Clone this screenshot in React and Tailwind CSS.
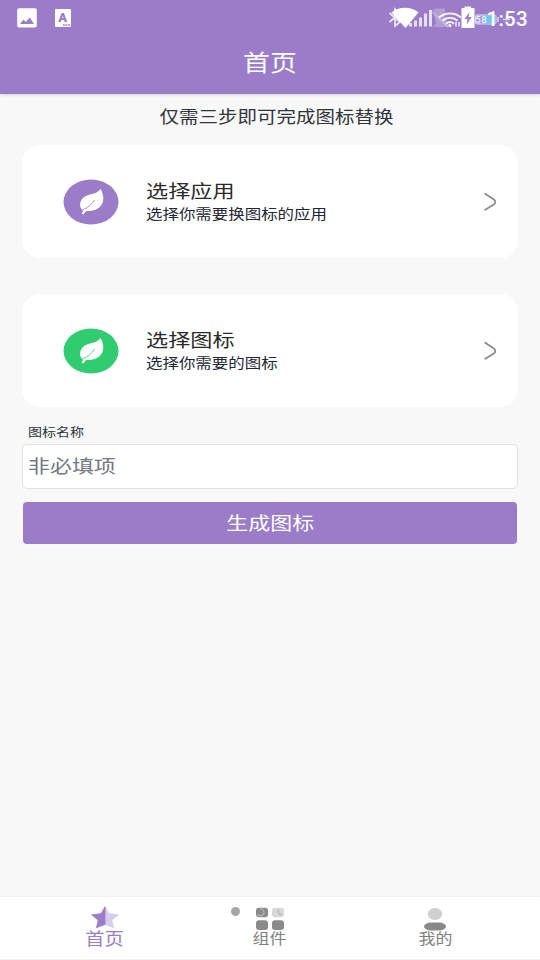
const steps = [
  { title: '选择应用', text: '选择你需要换图标的应用', color: 'text-[#9a7cc9]' },
  { title: '选择图标', text: '选择你需要的图标', color: 'text-[#30cc70]' },
];

function StatusBar() {
  return (
    <div className="relative h-9">
      <svg className="h-9 w-[540px]" viewBox="0 0 540 36" fill="none">
        {/* Notificações */}
        <rect x="17.2" y="8.2" width="19.6" height="19.4" rx="2" fill="#fff" />
        <path d="M20 24l3.500-4.500 2.300 2.400 3.900-4.300L34 24z" fill="#9a7cc9" />
        <rect x="55" y="9" width="16" height="18" rx="1" fill="#fff" />
        <text x="62.800" y="22" textAnchor="middle" fill="#9a7cc9" className="font-[Roboto] text-[13px] font-black">A</text>
        <path d="M63 25h7" stroke="#9a7cc9" strokeWidth="1.4" strokeDasharray="1.8 0.8" />

        {/* Bluetooth + wifi */}
        <path d="M389.500 13l10.500 9-5 4V9l5 4-10.500 9" stroke="#fff" strokeOpacity=".8" strokeWidth="1.800" />
        <path d="M391.500 12.500C398 6 412 6 418.500 12.500L405.500 28z" fill="#fff" />

        {/* Sinal */}
        <g fill="#fff" fillOpacity=".75">
          <rect x="409" y="23" width="3" height="3.500" />
          <rect x="414" y="20.500" width="3" height="6" />
          <rect x="419" y="17.500" width="3" height="9" />
          <rect x="424" y="13.500" width="3" height="13" />
          <rect x="429" y="10" width="3" height="16.500" />
        </g>
        <path d="M433 10l3-1.500h9v10l7 8.500h-19l3-4z" fill="#fff" fillOpacity=".25" />
        <path d="M430 10l18 17" stroke="#fff" strokeOpacity=".3" strokeWidth="1.500" />
        <g stroke="#fff" strokeWidth="2" strokeOpacity=".9">
          <path d="M439 17.500c6-5.500 16-5.500 22 0" />
          <path d="M442.500 20.700c4.500-4 10.500-4 15 0" />
          <path d="M446 23.700c2.500-2.200 5.500-2.200 8 0" />
        </g>
        <circle cx="450" cy="25.500" r="1.500" fill="#fff" />
        <path d="M456 22v4.500M459 22v4.500" stroke="#fff" strokeWidth="1.300" />

        {/* Bateria */}
        <path d="M464.500 6.500h6.500V8h3.500v20h-13V8h3z" fill="#fff" />
        <path d="M469.500 12l-5 7h3l-1 6 5-8h-3z" fill="#9a7cc9" />
        <rect x="475.500" y="15" width="20.500" height="9" rx="1.500" fill="#a99be0" stroke="#fff" strokeOpacity=".7" />
        <rect x="483" y="15.500" width="12.500" height="8" rx="1" fill="#72c6f2" />
        <text x="475.500" y="22.700" fill="#fff" className="font-[Roboto] text-[9px]" letterSpacing="1">58</text>
        <path d="M498 17v5M503 19.500h7" stroke="#fff" strokeOpacity=".7" strokeWidth="1.500" />
      </svg>
      <span className="absolute top-[7px] right-[12px] font-[Roboto] text-[20.500px] leading-6 font-medium tracking-[0.3px] text-white">
        1:53
      </span>
    </div>
  );
}

function LeafIcon({ className }) {
  return (
    <svg className={`h-[46px] w-14 flex-shrink-0 ${className}`} viewBox="0 0 56 46">
      <ellipse cx="28" cy="23" rx="27.500" ry="22.500" fill="currentColor" />
      <path
        d="M37.600 10c2.200 4 3.500 8.500 2.300 12.700-1.900 6.500-8.200 9.600-16.700 9.300-1.200 1-1.700 2.600-2.600 3.200-1 .5-2-.3-1.600-1.300l1-2.400c-2.800-2-3.700-5.300-2.500-8.500 1.800-5 6.300-6.700 11.300-8 4-1.100 6.800-2.200 8.800-5z"
        fill="#fff"
      />
      <path d="M19.500 31c5.500-2.500 9.300-5.500 12-10" fill="none" stroke="currentColor" strokeWidth=".8" />
    </svg>
  );
}

function StepCard({ title, text, color }) {
  return (
    <button className="flex h-[113px] w-full items-center rounded-[18px] bg-white pr-5 pl-[41px] text-left">
      <LeafIcon className={color} />
      <div className="-mt-[3px] ml-[27px] flex-1 whitespace-nowrap">
        <p className="w-fit origin-left scale-x-[1.19] text-[18.600px] leading-[26px] text-[#2b2b2b]">{title}</p>
        <p className="w-fit origin-left scale-x-[1.175] text-[14px] leading-[21px] text-[#222632]">{text}</p>
      </div>
      <svg className="h-5 w-[15px]" viewBox="0 0 15 20" fill="none" stroke="#8c8c8c" strokeWidth="1.800" strokeLinecap="round">
        <path d="M2.200 1.800l8.600 5.600q3 2.600 0 5.200l-8.600 5.200" />
      </svg>
    </button>
  );
}

function StarIcon() {
  return (
    <svg className="h-6 w-7" viewBox="0 0 28 24">
      <path d="M14 .8l4 6.900 9.300 1-6.500 5.500 1.800 7.500L14 18.500z" fill="#d8ccec" stroke="#d8ccec" strokeWidth=".8" strokeLinejoin="round" />
      <path d="M14 .8l-4 6.900-9.300 1 6.500 5.500-1.800 7.500 8.600-3.200z" fill="#9a7cc9" stroke="#9a7cc9" strokeWidth=".8" strokeLinejoin="round" />
    </svg>
  );
}

function GridIcon() {
  return (
    <svg className="h-6 w-7 overflow-visible" viewBox="0 0 28 24" fill="#8a8a8a">
      <rect y="1.700" width="12" height="9.600" rx="3" />
      <rect x="16" y="1.700" width="12" height="9.600" rx="3" fill="#d8d8d8" />
      <rect y="14.200" width="12" height="9.800" rx="3" />
      <rect x="16" y="14.200" width="12" height="9.800" rx="3" />
      <path d="M4 3a3.400 3.400 0 1 1-2 5.500M23 3.500a3 3 0 0 0 3 5" fill="none" stroke="#b5b5b5" strokeWidth="1.200" />
    </svg>
  );
}

function UserIcon() {
  return (
    <svg className="h-6 w-7 overflow-visible" viewBox="0 0 28 24">
      <ellipse cx="14" cy="8" rx="7.300" ry="6" fill="#d0d0d0" />
      <rect x="3" y="16.500" width="22" height="8" rx="7" ry="4" fill="#898989" />
    </svg>
  );
}

export default function App() {
  return (
    <div className="flex h-[960px] w-[540px] flex-col overflow-hidden bg-[#f8f8f8] font-['Noto_Sans_CJK_SC',sans-serif]">
      <header className="h-[94px] flex-shrink-0 bg-[#9a7cc9] shadow-[0_1px_3px_rgba(0,0,0,0.15)]">
        <StatusBar />
        <h1 className="mx-auto mt-[9px] w-fit scale-x-[1.17] text-[23px] leading-8 text-white">首页</h1>
      </header>

      <main className="flex-1 px-[22px] pt-[10px]">
        <p className="ml-[14px] flex justify-center text-[16.600px] leading-[25px] text-[#30343b]">
          <span className="scale-x-[1.175] whitespace-nowrap">仅需三步即可完成图标替换</span>
        </p>

        <div className="mt-4 flex flex-col gap-9">
          {steps.map((step) => (
            <StepCard key={step.title} {...step} />
          ))}
        </div>

        <label className="mt-4 ml-[6px] block w-fit origin-left scale-x-[1.17] text-[12px] leading-[18px] text-[#30343b]">
          图标名称
        </label>
        <div className="mt-[3px] flex h-[45px] items-center rounded-[5px] border border-[#e3e3e5] bg-white pb-[3px] pl-[5px]">
          <span className="origin-left scale-x-[1.18] text-[18.600px] leading-7 text-[#74777f]">非必填项</span>
        </div>
        <button className="mt-[13px] ml-px flex h-[42px] w-[494px] items-center justify-center rounded-[4px] bg-[#9a7cc9] pb-[3px] text-[18.600px] text-white">
          <span className="scale-x-[1.18]">生成图标</span>
        </button>
      </main>

      <nav className="relative grid h-[63px] flex-shrink-0 grid-cols-3 border-b border-[#f3f3f3] bg-white px-[22px] pt-[9px] shadow-[0_-1px_2px_rgba(0,0,0,0.03)]">
        <div className="flex flex-col items-center text-[#9a7cc9]">
          <StarIcon />
          <span className="-mt-0.5 scale-x-[1.17] text-[16.500px] leading-5">首页</span>
        </div>
        <div className="flex flex-col items-center text-[#808080]">
          <GridIcon />
          <span className="-mt-0.5 scale-x-[1.17] text-[14.500px] leading-5">组件</span>
        </div>
        <div className="flex flex-col items-center text-[#808080]">
          <UserIcon />
          <span className="-mt-0.5 scale-x-[1.17] text-[14.500px] leading-5">我的</span>
        </div>
        <span className="absolute top-[10px] left-[231px] size-[9px] rounded-full bg-[#a6a6a6]" />
      </nav>
    </div>
  );
}
